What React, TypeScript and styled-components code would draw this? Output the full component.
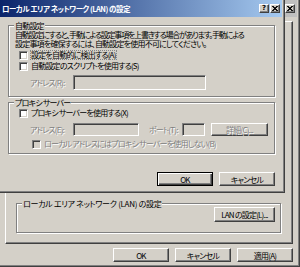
import React from "react";
import styled, { createGlobalStyle, css } from "styled-components";

const FACE = "#d4d0c8";

const GlobalStyle = createGlobalStyle`
  html, body { margin: 0; padding: 0; }
  body {
    background: ${FACE};
    font-family: "Noto Sans CJK JP", "Noto Sans", sans-serif;
    font-size: 8px;
    letter-spacing: -0.8px;
    font-feature-settings: "palt";
    color: #000;
  }
`;

const Desktop = styled.div`
  position: relative;
  width: 300px;
  height: 267px;
  overflow: hidden;
  background: ${FACE};
`;

const Window = styled.div<{ $left: number; $top: number; $width: number; $height: number }>`
  position: absolute;
  left: ${(p) => p.$left}px;
  top: ${(p) => p.$top}px;
  width: ${(p) => p.$width}px;
  height: ${(p) => p.$height}px;
  box-sizing: border-box;
  display: flex;
  flex-direction: column;
  background: ${FACE};
  border: 1px solid;
  border-color: ${FACE} #404040 #404040 ${FACE};
  box-shadow: inset 1px 1px #fff, inset -1px -1px #808080;
  padding: 2px;
`;

const TitleBar = styled.div<{ $active?: boolean }>`
  height: 17px;
  flex: none;
  display: flex;
  align-items: center;
  padding: 0 2px 0 3px;
  background: ${(p) =>
    p.$active
      ? "linear-gradient(to right, #0a246a, #a6caf0)"
      : "linear-gradient(to right, #808080, #c0c0c0)"};
  color: ${(p) => (p.$active ? "#fff" : FACE)};
  font-size: 7.5px;
  letter-spacing: -0.5px;
  font-weight: bold;
  white-space: nowrap;
`;

const TitleText = styled.span`
  flex: 1;
  line-height: 17px;
  overflow: hidden;
`;

const TitleButtons = styled.div`
  display: flex;
  gap: 1px;
`;

const TitleButton = styled.div`
  width: 10px;
  height: 9px;
  box-sizing: border-box;
  background: ${FACE};
  border: 1px solid;
  border-color: #fff #404040 #404040 #fff;
  box-shadow: inset -1px -1px #808080;
  display: flex;
  align-items: center;
  justify-content: center;
  color: #000;
  font-family: "DejaVu Sans", sans-serif;
  font-size: 7px;
  letter-spacing: 0;
  font-weight: bold;
  line-height: 1;
`;

const DialogBody = styled.div`
  flex: 1;
  display: flex;
  flex-direction: column;
  padding: 8px 7px 6px 9px;
`;

const Group = styled.div<{ $height: number; $gap?: number }>`
  position: relative;
  flex: none;
  height: ${(p) => p.$height}px;
  margin-top: ${(p) => p.$gap ?? 0}px;
  box-sizing: border-box;
  border: 1px solid #808080;
  box-shadow: inset 1px 1px #fff, 1px 1px #fff;
  display: flex;
  flex-direction: column;
`;

const Legend = styled.span<{ $spacing?: number }>`
  position: absolute;
  left: 5px;
  top: -5px;
  padding: 0 1px;
  background: ${FACE};
  line-height: 9px;
  white-space: nowrap;
  ${(p) => p.$spacing !== undefined && `letter-spacing: ${p.$spacing}px;`}
`;

const Description = styled.div`
  padding: 4px 0 0 6px;
  white-space: nowrap;
`;

const DescLine = styled.div<{ $tight?: boolean }>`
  line-height: 9px;
  height: 9px;
  letter-spacing: ${(p) => (p.$tight ? -1.2 : -0.8)}px;
`;

const Row = styled.div<{ $top: number; $indent: number; $height?: number }>`
  display: flex;
  align-items: center;
  height: ${(p) => p.$height ?? 10}px;
  margin-top: ${(p) => p.$top}px;
  padding-left: ${(p) => p.$indent}px;
  white-space: nowrap;
`;

const Box = styled.span<{ $disabled?: boolean }>`
  flex: none;
  width: 9px;
  height: 9px;
  box-sizing: border-box;
  background: ${(p) => (p.$disabled ? FACE : "#fff")};
  border: 1px solid;
  border-color: #808080 #fff #fff #808080;
  box-shadow: inset 1px 1px #404040, inset -1px -1px ${FACE};
`;

const disabledText = css`
  color: #808080;
  text-shadow: 1px 1px #fff;
`;

const Label = styled.span<{ $disabled?: boolean; $focus?: boolean }>`
  margin-left: 2px;
  padding: 0 1px;
  line-height: 10px;
  ${(p) => p.$disabled && disabledText}
  ${(p) => p.$focus && "outline: 1px dotted #888; outline-offset: -1px;"}
`;

const FieldLabel = styled.span<{ $width: number; $gap?: number }>`
  width: ${(p) => p.$width}px;
  margin-left: ${(p) => p.$gap ?? 0}px;
  flex: none;
  ${disabledText}
`;

const TextBox = styled.span<{ $width: number; $height: number }>`
  flex: none;
  width: ${(p) => p.$width}px;
  height: ${(p) => p.$height}px;
  box-sizing: border-box;
  background: ${FACE};
  border: 1px solid;
  border-color: #808080 #fff #fff #808080;
  box-shadow: inset 1px 1px #404040, inset -1px -1px ${FACE};
`;

const Button = styled.div<{ $width: number; $height: number; $default?: boolean; $disabled?: boolean; $gap?: number }>`
  flex: none;
  width: ${(p) => p.$width}px;
  height: ${(p) => p.$height}px;
  margin-left: ${(p) => p.$gap ?? 0}px;
  box-sizing: border-box;
  display: flex;
  align-items: center;
  justify-content: center;
  background: ${FACE};
  white-space: nowrap;
  ${(p) =>
    p.$default
      ? css`
          border: 1px solid #000;
          box-shadow: inset 1px 1px #fff, inset -1px -1px #404040, inset -2px -2px #808080;
        `
      : css`
          border: 1px solid;
          border-color: #fff #404040 #404040 #fff;
          box-shadow: inset -1px -1px #808080;
        `}
  ${(p) => p.$disabled && disabledText}
`;

const ButtonRow = styled.div<{ $top: number }>`
  display: flex;
  justify-content: flex-end;
  margin-top: ${(p) => p.$top}px;
`;

const ParentBody = styled.div`
  flex: 1;
  display: flex;
  flex-direction: column;
  padding: 4px 4px 2px 5px;
`;

const TabPage = styled.div`
  flex: 1;
  display: flex;
  flex-direction: column;
  justify-content: flex-end;
  padding: 0 11px 10px 10px;
  border: 1px solid;
  border-color: #fff #404040 #404040 #fff;
  box-shadow: inset -1px -1px #808080;
`;

const LanGroupInner = styled.div`
  display: flex;
  justify-content: flex-end;
  padding: 3px 5px 0 0;
`;

const CloseGlyph = () => (
  <svg width="6" height="5" viewBox="0 0 6 5">
    <path d="M0 0L5 5M1 0L6 5M5 0L0 5M6 0L1 5" stroke="#000" strokeWidth="0.9" />
  </svg>
);

export default function App() {
  return (
    <Desktop>
      <GlobalStyle />
      <Window $left={-3} $top={-3} $width={303} $height={270}>
        <TitleBar>
          <TitleText />
          <TitleButtons>
            <TitleButton>
              <CloseGlyph />
            </TitleButton>
          </TitleButtons>
        </TitleBar>
        <ParentBody>
          <TabPage>
            <Group $height={30}>
              <Legend $spacing={-0.3}>ローカル エリア ネットワーク (LAN) の設定</Legend>
              <LanGroupInner>
                <Button $width={61} $height={15}>
                  LAN の設定(L)...
                </Button>
              </LanGroupInner>
            </Group>
          </TabPage>
          <ButtonRow $top={4}>
            <Button $width={56} $height={14}>OK</Button>
            <Button $width={56} $height={14} $gap={6}>キャンセル</Button>
            <Button $width={56} $height={14} $gap={6}>適用(A)</Button>
          </ButtonRow>
        </ParentBody>
      </Window>

      <Window $left={-4} $top={-3} $width={289} $height={196}>
        <TitleBar $active>
          <TitleText>ローカル エリア ネットワーク (LAN) の設定</TitleText>
          <TitleButtons>
            <TitleButton>?</TitleButton>
            <TitleButton>
              <CloseGlyph />
            </TitleButton>
          </TitleButtons>
        </TitleBar>
        <DialogBody>
          <Group $height={72}>
            <Legend>自動設定</Legend>
            <Description>
              <DescLine $tight>
                自動設定にすると、手動による設定事項を上書きする場合があります。手動による
              </DescLine>
              <DescLine>設定事項を確保するには、自動設定を使用不可にしてください。</DescLine>
            </Description>
            <Row $top={2} $indent={10}>
              <Box />
              <Label $focus>設定を自動的に検出する(A)</Label>
            </Row>
            <Row $top={1} $indent={10}>
              <Box />
              <Label>自動設定のスクリプトを使用する(S)</Label>
            </Row>
            <Row $top={4} $indent={21} $height={15}>
              <FieldLabel $width={43}>アドレス(R):</FieldLabel>
              <TextBox $width={133} $height={15} />
            </Row>
          </Group>
          <Group $height={52} $gap={5}>
            <Legend>プロキシ サーバー</Legend>
            <Row $top={5} $indent={10}>
              <Box />
              <Label>プロキシ サーバーを使用する(X)</Label>
            </Row>
            <Row $top={5} $indent={21} $height={13}>
              <FieldLabel $width={43}>アドレス(E):</FieldLabel>
              <TextBox $width={66} $height={13} />
              <FieldLabel $width={33} $gap={10}>ポート(T):</FieldLabel>
              <TextBox $width={23} $height={13} />
              <Button $width={57} $height={13} $gap={6} $disabled>
                詳細(C)...
              </Button>
            </Row>
            <Row $top={3} $indent={23}>
              <Box $disabled />
              <Label $disabled>ローカル アドレスにはプロキシ サーバーを使用しない(B)</Label>
            </Row>
          </Group>
          <ButtonRow $top={18}>
            <Button $width={56} $height={14} $default>OK</Button>
            <Button $width={56} $height={14} $gap={6}>キャンセル</Button>
          </ButtonRow>
        </DialogBody>
      </Window>
    </Desktop>
  );
}
